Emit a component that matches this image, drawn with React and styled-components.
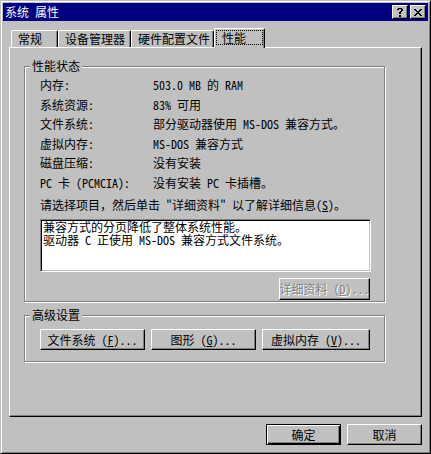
import React from 'react';
import styled, { createGlobalStyle, css } from 'styled-components';

const FONT = `"Noto Sans Mono CJK SC", "Noto Sans CJK SC", "Liberation Mono", monospace`;

const Global = createGlobalStyle`
  html, body { margin: 0; padding: 0; background: #c0c0c0; }
  body { font-family: ${FONT}; font-size: 12px; color: #000; }
  * { box-sizing: border-box; }
`;

const Window = styled.div`
  width: 431px;
  height: 454px;
  background: #c0c0c0;
  border: 1px solid;
  border-color: #c0c0c0 #000 #000 #c0c0c0;
  box-shadow: inset 1px 1px #fff, inset -1px -1px #808080;
  padding: 2px;
  display: flex;
  flex-direction: column;
`;

const TitleBar = styled.div`
  height: 18px;
  background: #000080;
  display: flex;
  align-items: center;
  padding: 0 2px;
`;

const TitleText = styled.div`
  flex: 1;
  color: #fff;
  line-height: 18px;
  white-space: pre;
`;

const CaptionButton = styled.div`
  width: 16px;
  height: 14px;
  margin-left: ${p => p.$gap}px;
  background: #c0c0c0;
  border: 1px solid;
  border-color: #fff #000 #000 #fff;
  box-shadow: inset -1px -1px #808080;
  display: flex;
  align-items: center;
  justify-content: center;
  svg { display: block; }
`;

const Body = styled.div`
  flex: 1;
  display: flex;
  flex-direction: column;
  padding: 7px 6px 6px;
`;

const TabStrip = styled.div`
  height: 19px;
  display: flex;
  align-items: flex-start;
  padding-left: 2px;
  position: relative;
  z-index: 1;
`;

const Tab = styled.div`
  width: ${p => p.$w}px;
  height: 17px;
  margin-top: 2px;
  border-top: 1px solid #fff;
  border-left: 1px solid #fff;
  border-right: 1px solid #000;
  border-radius: 2px 2px 0 0;
  box-shadow: inset -1px 0 #808080;
  padding-left: 6px;
  line-height: 16px;
  white-space: pre;
  background: #c0c0c0;
  ${p => p.$active && css`
    height: 20px;
    margin-top: 0;
    padding: 1px 1px 0;
    line-height: 13px;
  `}
`;

const Focus = styled.div`
  height: 15px;
  border: 1px dotted #000;
  padding-left: 5px;
  line-height: 13px;
`;

const Panel = styled.div`
  height: 370px;
  border: 1px solid;
  border-color: #fff #000 #000 #fff;
  box-shadow: inset -1px -1px #808080;
  padding: 18px 0 0 14px;
  display: flex;
  flex-direction: column;
  gap: 13px;
`;

const Group = styled.div`
  position: relative;
  width: 361px;
  height: ${p => p.$h}px;
  border: 1px solid #808080;
  box-shadow: inset 1px 1px #fff, 1px 1px #fff;
  padding: ${p => p.$pt}px 13px 0 15px;
  display: flex;
  flex-direction: column;
`;

const GroupLabel = styled.div`
  position: absolute;
  top: -8px;
  left: 5px;
  padding: 0 2px;
  line-height: 14px;
  background: #c0c0c0;
`;

const InfoGrid = styled.div`
  display: grid;
  grid-template-columns: 113px 1fr;
  grid-auto-rows: 19.6px;
  line-height: 19.6px;
  white-space: pre;
`;

const Prompt = styled.div`
  margin-top: 5px;
  line-height: 14px;
  white-space: pre;
`;

const ListBox = styled.div`
  margin-top: 7px;
  height: 53px;
  background: #fff;
  border: 1px solid;
  border-color: #808080 #fff #fff #808080;
  box-shadow: inset 1px 1px #000, inset -1px -1px #c0c0c0;
  padding: 0 0 0 2px;
  line-height: 13px;
  white-space: pre;
`;

const ButtonRow = styled.div`
  display: flex;
  justify-content: ${p => p.$end ? 'flex-end' : 'flex-start'};
  gap: 6px;
  margin-top: ${p => p.$mt || 0}px;
  padding-right: ${p => p.$pr || 0}px;
`;

const Button = styled.div`
  width: ${p => p.$w}px;
  height: ${p => p.$h || 21}px;
  background: #c0c0c0;
  border: 1px solid;
  border-color: #fff #000 #000 #fff;
  box-shadow: inset -1px -1px #808080;
  display: flex;
  align-items: center;
  justify-content: center;
  white-space: pre;
  line-height: 14px;
  ${p => p.$default && css`
    border-color: #000;
    box-shadow: inset 1px 1px #fff, inset -1px -1px #000, inset -2px -2px #808080;
  `}
  ${p => p.$disabled && css`
    color: #808080;
    text-shadow: 1px 1px #fff;
  `}
`;

const HelpIcon = () => (
  <svg width="8" height="9" viewBox="0 0 8 9" shapeRendering="crispEdges">
    <path fill="#000" d="M2 0h4v1H2zM1 1h2v1H1zM5 1h2v2H5zM4 3h2v1H4zM3 4h2v2H3zM3 7h2v2H3z" />
  </svg>
);

const CloseIcon = () => (
  <svg width="8" height="7" viewBox="0 0 8 7" shapeRendering="crispEdges">
    <path fill="#000" d="M0 0h2v1H0zM6 0h2v1H6zM1 1h2v1H1zM5 1h2v1H5zM2 2h4v1H2zM3 3h2v1H3zM2 4h4v1H2zM1 5h2v1H1zM5 5h2v1H5zM0 6h2v1H0zM6 6h2v1H6z" />
  </svg>
);

const info = [
  ['内存:', '503.0 MB 的 RAM'],
  ['系统资源:', '83% 可用'],
  ['文件系统:', '部分驱动器使用 MS-DOS 兼容方式。'],
  ['虚拟内存:', 'MS-DOS 兼容方式'],
  ['磁盘压缩:', '没有安装'],
  ['PC 卡 (PCMCIA):', '没有安装 PC 卡插槽。'],
];

const tabs = [
  { label: '常规', w: 47 },
  { label: '设备管理器', w: 73 },
  { label: '硬件配置文件', w: 83 },
  { label: '性能', w: 51, active: true },
];

export default function App() {
  return (
    <>
      <Global />
      <Window lang="zh-CN">
        <TitleBar>
          <TitleText>系统 属性</TitleText>
          <CaptionButton $gap={0}><HelpIcon /></CaptionButton>
          <CaptionButton $gap={2}><CloseIcon /></CaptionButton>
        </TitleBar>
        <Body>
          <TabStrip>
            {tabs.map(t => (
              <Tab key={t.label} $w={t.w} $active={t.active}>
                {t.active ? <Focus>{t.label}</Focus> : t.label}
              </Tab>
            ))}
          </TabStrip>
          <Panel>
            <Group $h={236} $pt={8}>
              <GroupLabel>性能状态</GroupLabel>
              <InfoGrid>
                {info.map(([k, v]) => (
                  <React.Fragment key={k}>
                    <div>{k}</div>
                    <div>{v}</div>
                  </React.Fragment>
                ))}
              </InfoGrid>
              <Prompt>请选择项目，然后单击 "详细资料" 以了解详细信息(<u>S</u>)。</Prompt>
              <ListBox>
                <div>兼容方式的分页降低了整体系统性能。</div>
                <div>驱动器 C 正使用 MS-DOS 兼容方式文件系统。</div>
              </ListBox>
              <ButtonRow $end $mt={6} $pr={1}>
                <Button $w={91} $h={22} $disabled>详细资料 (<u>D</u>)...</Button>
              </ButtonRow>
            </Group>
            <Group $h={47} $pt={13}>
              <GroupLabel>高级设置</GroupLabel>
              <ButtonRow>
                <Button $w={105}>文件系统 (<u>F</u>)...</Button>
                <Button $w={105}>图形 (<u>G</u>)...</Button>
                <Button $w={108}>虚拟内存 (<u>V</u>)...</Button>
              </ButtonRow>
            </Group>
          </Panel>
          <ButtonRow $end $mt={7}>
            <Button $w={75} $default>确定</Button>
            <Button $w={75}>取消</Button>
          </ButtonRow>
        </Body>
      </Window>
    </>
  );
}
